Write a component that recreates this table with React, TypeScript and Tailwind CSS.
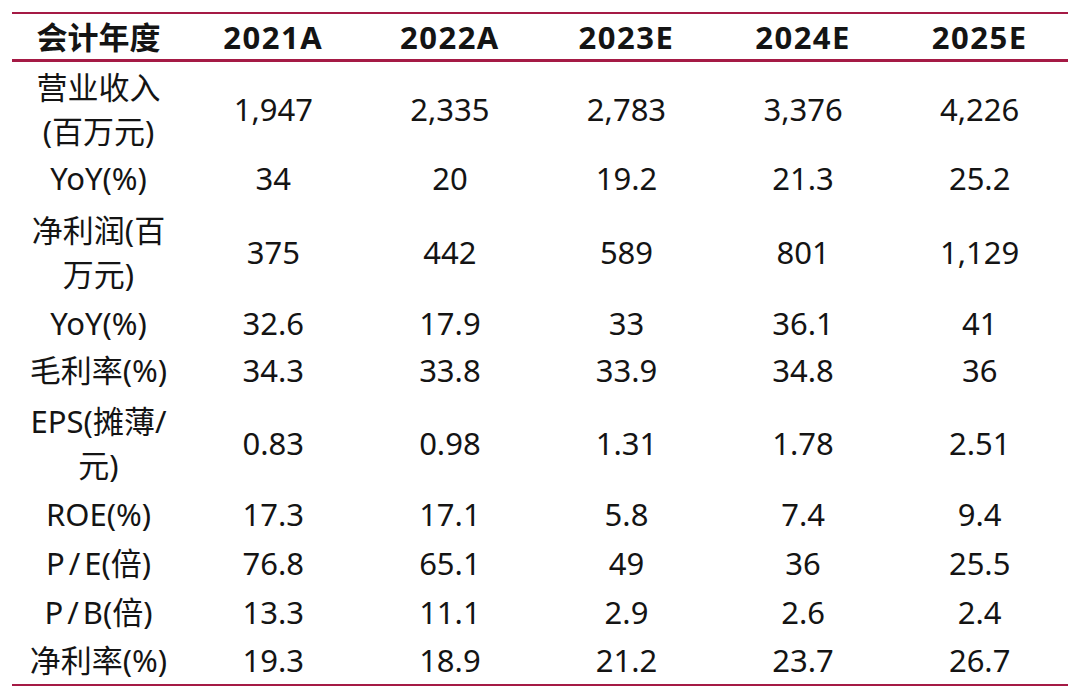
const YEARS = ["2021A", "2022A", "2023E", "2024E", "2025E"];

type Row = {
  label: React.ReactNode;
  values: string[];
  h: string;
};

const Slash = () => <span className="mx-[4px]">/</span>;

const ROWS: Row[] = [
  {
    label: (
      <>
        营业收入
        <br />
        (百万元)
      </>
    ),
    values: ["1,947", "2,335", "2,783", "3,376", "4,226"],
    h: "h-[93px]",
  },
  { label: "YoY(%)", values: ["34", "20", "19.2", "21.3", "25.2"], h: "h-[46px]" },
  {
    label: (
      <>
        净利润(百
        <br />
        万元)
      </>
    ),
    values: ["375", "442", "589", "801", "1,129"],
    h: "h-[101px]",
  },
  { label: "YoY(%)", values: ["32.6", "17.9", "33", "36.1", "41"], h: "h-[42px]" },
  { label: "毛利率(%)", values: ["34.3", "33.8", "33.9", "34.8", "36"], h: "h-[52px]" },
  {
    label: (
      <>
        EPS(摊薄/
        <br />
        元)
      </>
    ),
    values: ["0.83", "0.98", "1.31", "1.78", "2.51"],
    h: "h-[94px]",
  },
  { label: "ROE(%)", values: ["17.3", "17.1", "5.8", "7.4", "9.4"], h: "h-[48px]" },
  {
    label: (
      <>
        P<Slash />E(倍)
      </>
    ),
    values: ["76.8", "65.1", "49", "36", "25.5"],
    h: "h-[49px]",
  },
  {
    label: (
      <>
        P<Slash />B(倍)
      </>
    ),
    values: ["13.3", "11.1", "2.9", "2.6", "2.4"],
    h: "h-[49px]",
  },
  { label: "净利率(%)", values: ["19.3", "18.9", "21.2", "23.7", "26.7"], h: "h-[48px]" },
];

export default function App() {
  return (
    <div className="h-[699px] w-[1080px] overflow-hidden bg-white px-[12px] pt-[12px] font-['Noto_Sans','Noto_Sans_CJK_SC',sans-serif] text-[31px] leading-[44px] text-[#141414]">
      <div className="flex h-[50px] items-center border-t-2 border-b-[3px] border-[#a51a45] font-bold">
        <div className="w-[173px] text-center">会计年度</div>
        {YEARS.map((y) => (
          <div key={y} className="flex-1 text-center tracking-[1.5px]">
            {y}
          </div>
        ))}
      </div>
      <div className="border-b-2 border-[#a51a45]">
        {ROWS.map((r, i) => (
          <div key={i} className={`flex items-center ${r.h}`}>
            <div className="w-[173px] text-center">{r.label}</div>
            {r.values.map((v, j) => (
              <div key={j} className="flex-1 text-center">
                {v}
              </div>
            ))}
          </div>
        ))}
      </div>
    </div>
  );
}
